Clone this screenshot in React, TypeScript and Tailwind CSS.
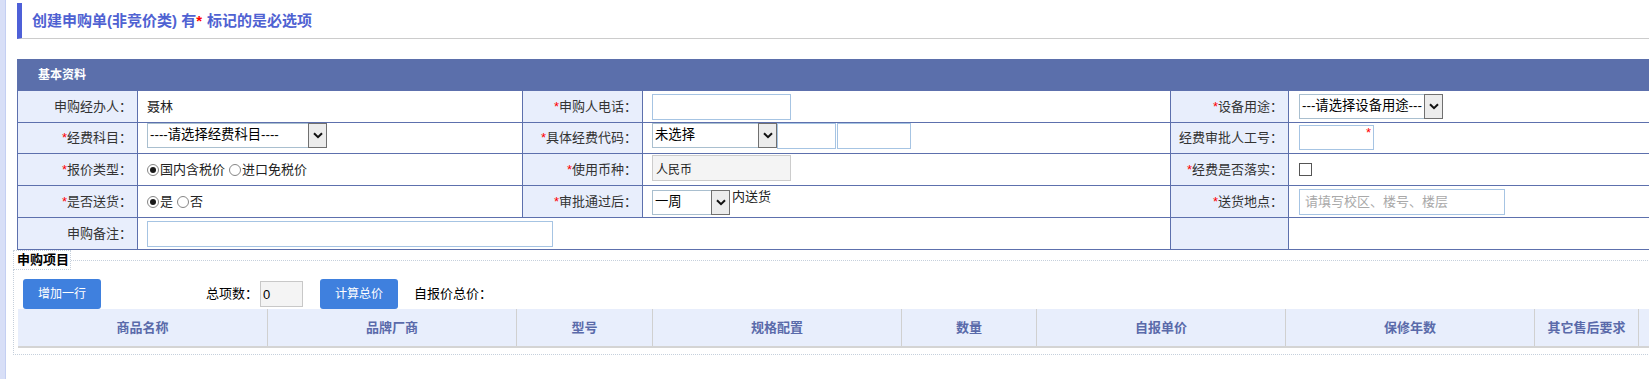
import React from "react";

const LINE = "border-[#5d70ad]";

function Star() {
  return <span className="text-[#ff0000]">*</span>;
}

function Chevron() {
  return (
    <svg width="10" height="7" viewBox="0 0 10 7">
      <path d="M1 1.2 L5 5.2 L9 1.2" stroke="#111" strokeWidth="2" fill="none" />
    </svg>
  );
}

function Select({ text, width }: { text: string; width: string }) {
  return (
    <div className={`flex h-[25px] shrink-0 border border-[#a9bfcf] bg-white ${width}`}>
      <span className="flex-1 overflow-hidden whitespace-nowrap pl-[2px] text-[13.33px] leading-[22px] text-black">
        {text}
      </span>
      <span className="-my-px -mr-px flex w-[19px] items-center justify-center border border-[#707070] bg-[#ececec]">
        <Chevron />
      </span>
    </div>
  );
}

function Radio({ checked }: { checked?: boolean }) {
  return (
    <svg width="12" height="12" viewBox="0 0 12 12" className="shrink-0">
      <circle cx="6" cy="6" r="5.5" fill="#fff" stroke="#858585" />
      {checked && <circle cx="6" cy="6" r="3" fill="#1a1a1a" />}
    </svg>
  );
}

function Label({ children, star }: { children?: React.ReactNode; star?: boolean }) {
  return (
    <div className={`flex items-center justify-end border-r border-b ${LINE} bg-[#e8eefc] pr-[5px] text-[13px] leading-[16px] text-[#333]`}>
      {star && <Star />}
      {children}
    </div>
  );
}

function Cell({ children, className = "" }: { children?: React.ReactNode; className?: string }) {
  return <div className={`flex border-r border-b ${LINE} text-[13px] leading-[16px] text-[#222] ${className}`}>{children}</div>;
}

const columns = [
  { name: "商品名称", w: "w-[250px]" },
  { name: "品牌厂商", w: "w-[249px]" },
  { name: "型号", w: "w-[136px]" },
  { name: "规格配置", w: "w-[249px]" },
  { name: "数量", w: "w-[135px]" },
  { name: "自报单价", w: "w-[249px]" },
  { name: "保修年数", w: "w-[249px]" },
  { name: "其它售后要求", w: "w-[104px]" },
];

export default function App() {
  return (
    <div className="flex min-h-screen w-full overflow-hidden bg-white font-['Liberation_Sans','Noto_Sans_CJK_SC',sans-serif]">
      <div className="w-[6px] shrink-0 border-r border-[#c4cff2] bg-[#d8dff7]" />

      <div className="w-[1720px] shrink-0 pl-[7px]">
        {/* page title */}
        <div className="ml-[4px] mt-[3px] flex h-[36px] items-center border-b border-l-[5px] border-b-[#cccccc] border-l-[#4e60d8] pl-[10px] text-[15px] font-bold leading-[18px] text-[#4f62d2]">
          创建申购单(非竞价类) 有<Star />
          <span className="ml-[5px]">标记的是必选项</span>
        </div>

        {/* basic info */}
        <div className={`ml-[4px] mt-[20px] border-l ${LINE}`}>
          <div className="flex h-[31px] items-center bg-[#5b6fab] pl-[20px] text-[12px] font-bold text-white">基本资料</div>
          <div className={`grid grid-cols-[120px_385px_120px_528px_118px_1fr] grid-rows-[32px_31px_32px_32px_32px] border-t ${LINE}`}>
            <Label>申购经办人：</Label>
            <Cell className="items-center pl-[9px]">聂林</Cell>
            <Label star>申购人电话：</Label>
            <Cell className="items-center pl-[9px]">
              <input className="h-[26px] w-[139px] border border-[#a6c4e3] bg-white px-[2px] outline-none" />
            </Cell>
            <Label star>设备用途：</Label>
            <Cell className="items-center pl-[10px]">
              <Select text="---请选择设备用途---" width="w-[144px]" />
            </Cell>

            <Label star>经费科目：</Label>
            <Cell className="items-start pl-[9px]">
              <Select text="----请选择经费科目----" width="w-[180px]" />
            </Cell>
            <Label star>具体经费代码：</Label>
            <Cell className="items-start pl-[9px]">
              <Select text="未选择" width="w-[125px]" />
              <input className="h-[26px] w-[59px] border border-[#a6c4e3] bg-white outline-none" />
              <input className="ml-px h-[26px] w-[74px] border border-[#a6c4e3] bg-white outline-none" />
            </Cell>
            <Label>经费审批人工号：</Label>
            <Cell className="items-start pl-[10px] pt-[2px]">
              <div className="relative">
                <input className="h-[25px] w-[75px] border border-[#a6c4e3] bg-white outline-none" />
                <span className="absolute right-[3px] top-[1px] text-[13px] leading-[13px] text-[#ff0000]">*</span>
              </div>
            </Cell>

            <Label star>报价类型：</Label>
            <Cell className="items-center pl-[9px]">
              <Radio checked />
              <span className="ml-px">国内含税价</span>
              <span className="ml-[4px]"><Radio /></span>
              <span className="ml-px">进口免税价</span>
            </Cell>
            <Label star>使用币种：</Label>
            <Cell className="items-start pl-[9px] pt-px">
              <input
                readOnly
                value="人民币"
                className="h-[26px] w-[139px] border border-[#cccccc] bg-[#f4f4f4] px-[3px] text-[12px] text-[#222] outline-none"
              />
            </Cell>
            <Label star>经费是否落实：</Label>
            <Cell className="items-center pl-[10px]">
              <span className="h-[13px] w-[13px] border border-[#555] bg-white" />
            </Cell>

            <Label star>是否送货：</Label>
            <Cell className="items-center pl-[9px]">
              <Radio checked />
              <span className="ml-px">是</span>
              <span className="ml-[4px]"><Radio /></span>
              <span className="ml-px">否</span>
            </Cell>
            <Label star>审批通过后：</Label>
            <Cell className="items-start pl-[9px] pt-[4px]">
              <Select text="一周" width="w-[78px]" />
              <span className="ml-[2px] text-[13px] leading-[14px]">内送货</span>
            </Cell>
            <Label star>送货地点：</Label>
            <Cell className="items-center pl-[10px]">
              <input
                placeholder="请填写校区、楼号、楼层"
                className="h-[26px] w-[206px] border border-[#a6c4e3] bg-white px-[5px] text-[13px] outline-none placeholder:text-[#a9a9a9]"
              />
            </Cell>

            <Label>申购备注：</Label>
            <Cell className="col-span-3 items-center pl-[9px]">
              <input className="h-[26px] w-[406px] border border-[#a6c4e3] bg-white outline-none" />
            </Cell>
            <Label />
            <Cell />
          </div>
        </div>

        {/* purchase items */}
        <fieldset className="border border-dotted border-[#c6d0dc] pb-[6px] pl-[4px]">
          <legend className="-ml-[5px] border border-dotted border-[#c6d0dc] pl-[3px] pr-px text-[13px] font-bold leading-[18px] text-black">
            申购项目
          </legend>
          <div className="mt-[9px] flex h-[30px] items-center pl-[5px] text-[13px] text-black">
            <button className="flex h-[30px] w-[78px] items-center justify-center rounded-[3px] bg-[#3f80de] text-[12px] text-white">
              增加一行
            </button>
            <span className="ml-[105px]">总项数：</span>
            <input
              readOnly
              value="0"
              className="ml-[2px] h-[26px] w-[43px] border border-[#c8c8c8] bg-[#f4f4f4] px-[2px] text-[13px] outline-none"
            />
            <button className="ml-[17px] flex h-[30px] w-[78px] items-center justify-center rounded-[3px] bg-[#3f80de] text-[12px] text-white">
              计算总价
            </button>
            <span className="ml-[16px]">自报价总价：</span>
          </div>
          <div className="flex h-[39px] border-b-2 border-[#d4d4d4] bg-[#e8eefc] text-[13px] font-bold text-[#5a6aaa]">
            {columns.map((c) => (
              <div key={c.name} className={`flex shrink-0 items-center justify-center border-r border-[#d0d0d0] ${c.w}`}>
                {c.name}
              </div>
            ))}
            <div className="flex-1" />
          </div>
        </fieldset>
      </div>
    </div>
  );
}
